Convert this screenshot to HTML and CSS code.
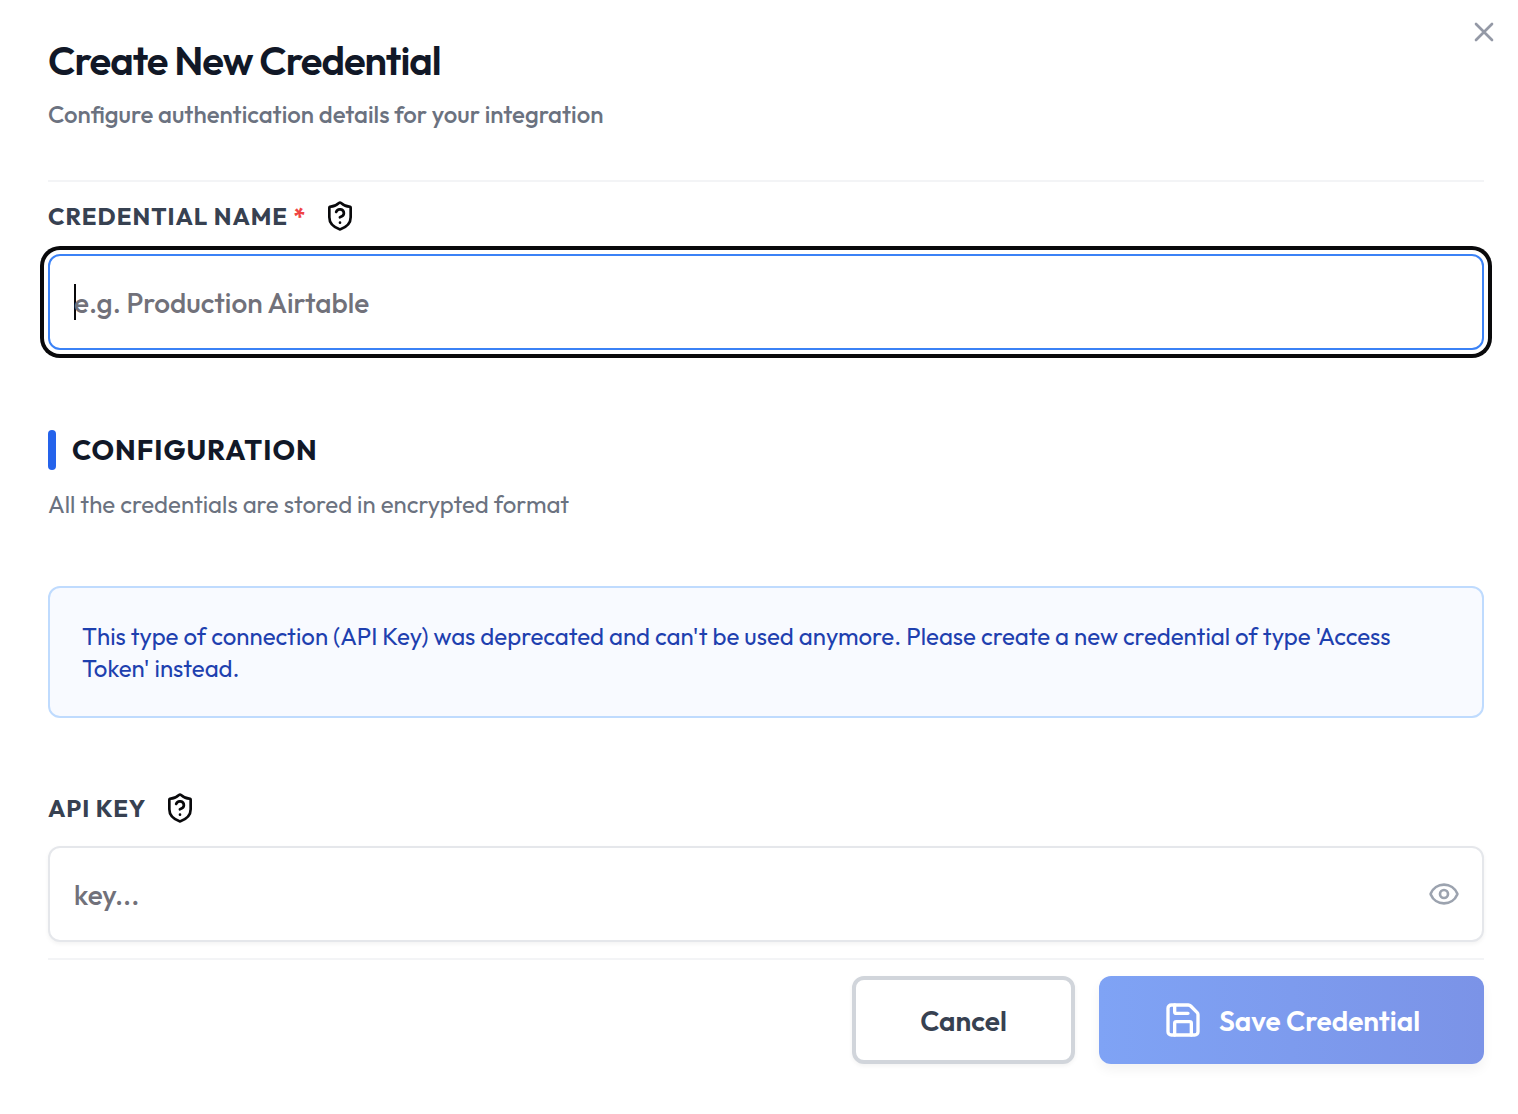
FILE: index.html
```html
<!DOCTYPE html>
<html lang="en">
<head>
  <meta charset="UTF-8">
  <meta name="viewport" content="width=device-width, initial-scale=1.0">
  <title>Create New Credential</title>
  <link rel="stylesheet" href="styles.css">
</head>
<body>
  <main class="dialog">
    <button type="button" class="close" aria-label="Close">
      <svg viewBox="0 0 24 24"><path d="M18 6 6 18M6 6l12 12"/></svg>
    </button>

    <header class="dialog-header">
      <h1>Create New Credential</h1>
      <p>Configure authentication details for your integration</p>
    </header>

    <form class="form">
      <div class="field">
        <div class="field-label">
          <label for="name">CREDENTIAL NAME <span class="required">*</span></label>
          <svg class="help" viewBox="0 0 24 24">
            <path d="M20 13c0 5-3.500 7.500-7.660 8.950a1 1 0 0 1-.67-.01C7.500 20.500 4 18 4 13V6a1 1 0 0 1 1-1c2 0 4.500-1.200 6.240-2.720a1.170 1.170 0 0 1 1.520 0C14.510 3.810 17 5 19 5a1 1 0 0 1 1 1z"/>
            <path d="M9.100 9a3 3 0 0 1 5.820 1c0 2-3 3-3 3"/>
            <path d="M12 17h.01"/>
          </svg>
        </div>
        <input type="text" id="name" class="input focused" placeholder="e.g. Production Airtable" required>
      </div>

      <section class="section">
        <h2>CONFIGURATION</h2>
        <p>All the credentials are stored in encrypted format</p>
      </section>

      <div class="notice">This type of connection (API Key) was deprecated and can't be used anymore. Please create a new credential of type 'Access Token' instead.</div>

      <div class="field">
        <div class="field-label">
          <label for="key">API KEY</label>
          <svg class="help" viewBox="0 0 24 24">
            <path d="M20 13c0 5-3.500 7.500-7.660 8.950a1 1 0 0 1-.67-.01C7.500 20.500 4 18 4 13V6a1 1 0 0 1 1-1c2 0 4.500-1.200 6.240-2.720a1.170 1.170 0 0 1 1.520 0C14.510 3.810 17 5 19 5a1 1 0 0 1 1 1z"/>
            <path d="M9.100 9a3 3 0 0 1 5.820 1c0 2-3 3-3 3"/>
            <path d="M12 17h.01"/>
          </svg>
        </div>
        <div class="input-wrap">
          <input type="password" id="key" class="input" placeholder="key...">
          <button type="button" class="reveal" aria-label="Show key">
            <svg viewBox="0 0 24 24">
              <path d="M2.062 12.348a1 1 0 0 1 0-.696 10.750 10.750 0 0 1 19.876 0 1 1 0 0 1 0 .696 10.750 10.750 0 0 1-19.876 0"/>
              <circle cx="12" cy="12" r="3"/>
            </svg>
          </button>
        </div>
      </div>

      <footer class="actions">
        <button type="button" class="btn btn-cancel">Cancel</button>
        <button type="submit" class="btn btn-save">
          <svg viewBox="0 0 24 24">
            <path d="M15.200 3a2 2 0 0 1 1.400.6l3.800 3.800a2 2 0 0 1 .6 1.400V19a2 2 0 0 1-2 2H5a2 2 0 0 1-2-2V5a2 2 0 0 1 2-2z"/>
            <path d="M17 21v-7a1 1 0 0 0-1-1H8a1 1 0 0 0-1 1v7M7 3v4a1 1 0 0 0 1 1h7"/>
          </svg>
          Save Credential
        </button>
      </footer>
    </form>
  </main>
</body>
</html>
```

FILE: styles.css
```css
* {
  box-sizing: border-box;
}

body {
  margin: 0;
  background: #fff;
  font-family: Outfit, Lato, sans-serif;
}

h1, h2, p {
  margin: 0;
}

svg {
  display: block;
  fill: none;
  stroke: currentColor;
  stroke-width: 2;
  stroke-linecap: round;
  stroke-linejoin: round;
}

button, input {
  font-family: inherit;
}

button {
  cursor: pointer;
}

.dialog {
  position: relative;
  padding: 40px 34px 48px 48px;
}

.close {
  position: absolute;
  top: 16px;
  right: 18px;
  padding: 0;
  border: none;
  background: none;
  color: #9499a6;
}

.close svg {
  width: 32px;
  height: 32px;
}

.dialog-header {
  padding-bottom: 50px;
  border-bottom: 2px solid #f3f4f6;
}

.dialog-header h1 {
  color: #111827;
  font-size: 40px;
  font-weight: 600;
  letter-spacing: -1px;
  line-height: 40px;
}

.dialog-header p {
  margin-top: 18px;
  color: #6b7280;
  font-size: 24px;
  font-weight: 500;
  line-height: 32px;
}

.form {
  padding-top: 16px;
}

.field-label {
  display: flex;
  align-items: center;
  gap: 16px;
  height: 36px;
  margin-bottom: 20px;
  color: #374151;
  font-size: 24px;
  font-weight: 700;
  letter-spacing: 1px;
}

.required {
  color: #ef4444;
}

.help {
  width: 36px;
  height: 32px;
  color: #09090b;
}

.input {
  display: block;
  width: 100%;
  height: 96px;
  padding: 0 24px;
  border: 2px solid #e5e7eb;
  border-radius: 12px;
  outline: none;
  background-color: #fff;
  box-shadow: 0 2px 4px rgba(0, 0, 0, 0.05);
  font-size: 28px;
  font-weight: 500;
}

.input::placeholder {
  color: #71717a;
  opacity: 1;
}

/* focus ring and caret */
.input.focused {
  border-color: #3b82f6;
  background-image: linear-gradient(#09090b, #09090b);
  background-repeat: no-repeat;
  background-position: 24px center;
  background-size: 2px 36px;
  box-shadow: 0 0 0 4px #fff, 0 0 0 8px #09090b;
}

.input-wrap {
  position: relative;
}

.input-wrap .input {
  padding-right: 80px;
}

.reveal {
  position: absolute;
  top: 32px;
  right: 24px;
  padding: 0;
  border: none;
  background: none;
  color: #9ca3af;
}

.reveal svg {
  width: 32px;
  height: 32px;
}

.section {
  margin-top: 80px;
}

.section h2 {
  display: flex;
  align-items: center;
  gap: 16px;
  color: #111827;
  font-size: 28px;
  font-weight: 700;
  letter-spacing: 1px;
  line-height: 40px;
}

.section h2::before {
  content: "";
  width: 8px;
  height: 40px;
  border-radius: 4px;
  background: #2563eb;
}

.section p {
  margin-top: 18px;
  color: #6b7280;
  font-size: 24px;
  line-height: 32px;
}

.notice {
  margin: 66px 0 72px;
  padding: 32px;
  border: 2px solid #bfdbfe;
  border-radius: 12px;
  background: #f8faff;
  color: #1e40af;
  font-size: 24px;
  line-height: 32px;
}

.actions {
  display: flex;
  justify-content: flex-end;
  gap: 24px;
  margin-top: 16px;
  padding-top: 16px;
  border-top: 2px solid #f3f4f6;
}

.btn {
  display: flex;
  align-items: center;
  justify-content: center;
  gap: 16px;
  height: 88px;
  border-radius: 12px;
  font-size: 28px;
  font-weight: 600;
}

.btn-cancel {
  min-width: 223px;
  border: 4px solid #d1d5db;
  background: #fff;
  color: #374151;
  box-shadow: 0 2px 4px rgba(0, 0, 0, 0.05);
}

.btn-save {
  min-width: 385px;
  border: none;
  background: linear-gradient(to right, #7fa3f5, #7b93e7);
  color: #fff;
  box-shadow: 0 6px 12px rgba(0, 0, 0, 0.05);
}

.btn-save svg {
  width: 40px;
  height: 40px;
}
```
